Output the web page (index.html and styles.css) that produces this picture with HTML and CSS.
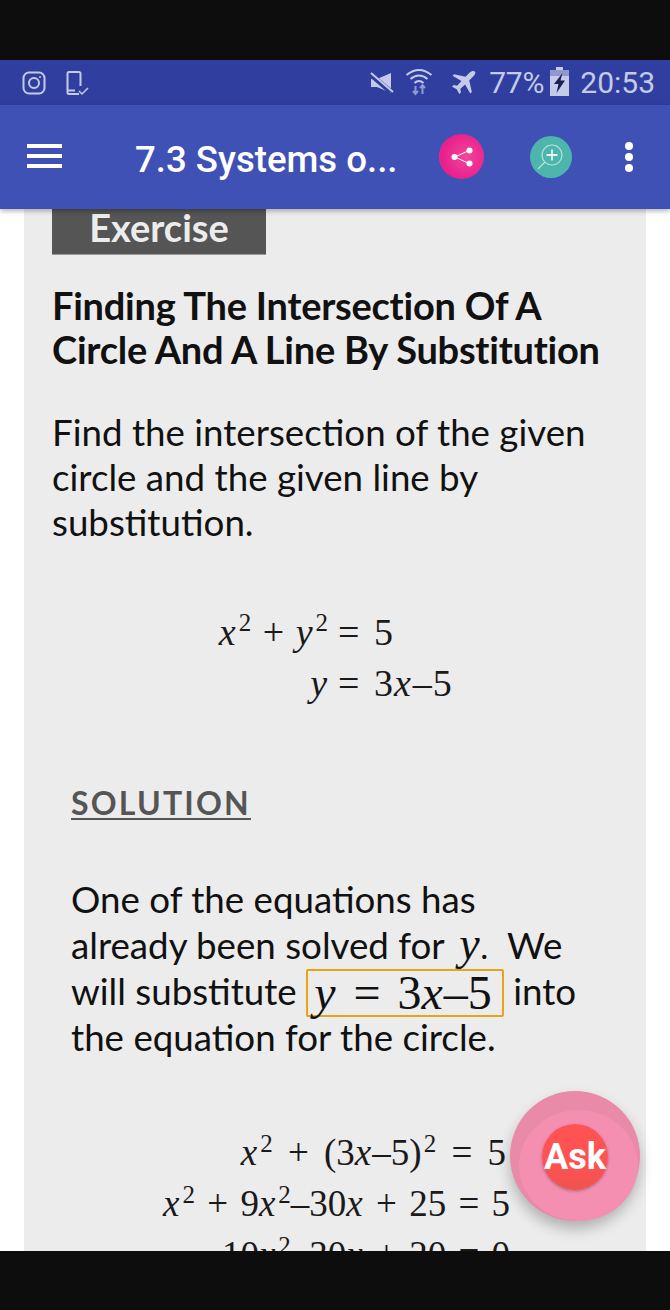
FILE: index.html
```html
<!DOCTYPE html>
<html lang="en">
<head>
<meta charset="utf-8">
<title>7.3 Systems</title>
<link rel="stylesheet" href="styles.css">
</head>
<body>
<div class="phone">
  <div class="black-top"></div>
  <div class="status">
    <svg class="st-ig" width="24" height="24" viewBox="0 0 24 24" fill="none" stroke="#c5cae9" stroke-width="2"><rect x="1.500" y="1.500" width="21" height="21" rx="5.500"/><circle cx="12" cy="12" r="5"/><circle cx="18" cy="6" r="1" fill="#c5cae9" stroke="none"/></svg>
    <svg class="st-dev" width="26" height="26" viewBox="0 0 26 26" fill="none" stroke="#c5cae9" stroke-width="2"><path d="M14 23H4a1.500 1.500 0 0 1-1.500-1.500V2.500A1.500 1.500 0 0 1 4 1h10a1.500 1.500 0 0 1 1.500 1.500V15"/><path d="M3 19.500h7" /><path d="M14 20l3 3 6-6" stroke-width="1.500"/></svg>
    <div class="st-spacer"></div>
    <svg class="st-mute" width="24" height="24" viewBox="0 0 24 24" fill="#c5cae9"><path d="M1 8h6l14-6v20L7 16H1z"/><path d="M0 3l21 18" stroke="#303f9f" stroke-width="5"/><path d="M1 2l22 19" stroke="#c5cae9" stroke-width="2"/></svg>
    <svg class="st-wifi" width="28" height="28" viewBox="0 0 28 28" fill="none" stroke="#c5cae9" stroke-width="2"><path d="M1.500 7Q14-3 26.500 7"/><path d="M5.500 11Q14 4 22.500 11"/><path d="M9.500 15Q14 11 18.500 15"/><path d="M10.500 18v8M8 23l2.500 3 2.500-3" stroke="#8f99cf"/><path d="M17.500 26v-8M15 20l2.500-3 2.500 3" stroke="#8f99cf"/></svg>
    <svg class="st-plane" width="25" height="25" viewBox="0 0 24 24" fill="#c5cae9"><path d="M23 1.500c-1.500-1-3.500-.5-5 1L14 6.500 3 4 1.500 5.500l8.500 5-4 4.500-3.500-.5L1 16l4.500 2.500L8 23l1.500-1.500-.5-3.500 4.500-4 5 8.500L20 21l-2.500-11 4-4c1.500-1.500 2.500-3 1.500-4.500z"/></svg>
    <span class="st-pct">77%</span>
    <svg class="st-batt" width="19" height="29" viewBox="0 0 19 29"><path d="M6 0h7v3h6v26H0V3h6z" fill="#c5cae9"/><path d="M0 3h19v6H0z" fill="#8f99cf"/><path d="M12.500 6L4 17h4.500l-2 9L15 13.500h-4.500z" fill="#1a2050"/></svg>
    <span class="st-time">20:53</span>
  </div>
  <header class="appbar">
    <div class="burger"><span></span><span></span><span></span></div>
    <div class="title">7.3 Systems o...</div>
    <div class="round share">
      <svg width="30" height="30" viewBox="0 0 30 30" fill="#fff" stroke="#fff" stroke-width="1"><path d="M8 15l14-6.500M8 15l14 6.500" fill="none"/><circle cx="7.500" cy="15" r="3" stroke="none"/><circle cx="22.500" cy="8.500" r="3" stroke="none"/><circle cx="22.500" cy="21.500" r="3" stroke="none"/></svg>
    </div>
    <div class="round zoom">
      <svg width="34" height="34" viewBox="0 0 34 34" fill="none" stroke="#b6e2da" stroke-width="1.200"><circle cx="18" cy="15" r="10"/><path d="M11 22L4 29"/><path d="M18 9.500v11M12.500 15h11" stroke="#e2f4f0" stroke-width="1.800"/></svg>
    </div>
    <div class="dots"><i></i><i></i><i></i></div>
  </header>
  <main class="content">
    <article class="card">
      <div class="badge">Exercise</div>
      <h1 class="heading">Finding The Intersection Of A Circle And A Line By Substitution</h1>
      <p class="lead">Find the intersection of the given circle and the given line by substitution.</p>
      <div class="math-a">
        <div class="eq-row"><span class="lhs"><i>x</i><sup>2</sup> + <i>y</i><sup>2</sup></span><span class="rhs">= 5</span></div>
        <div class="eq-row"><span class="lhs"><i>y</i></span><span class="rhs">= 3<i>x</i>–5</span></div>
      </div>
      <section class="solution">
        <h2 class="sol-title">SOLUTION</h2>
        <p class="sol-text">One of the equations has already been solved for <i class="mi">y</i><span class="mdot">.</span>&nbsp; We will substitute <span class="boxed"><i>y</i> = 3<i>x</i>–5</span> into the equation for the circle.</p>
        <div class="math-b">
          <div class="b1"><i>x</i><sup>2</sup> + (3<i>x</i>–5)<sup>2</sup> = 5</div>
          <div class="b2"><i>x</i><sup>2</sup> + 9<i>x</i><sup>2</sup>–30<i>x</i> + 25 = 5</div>
          <div class="b2">10<i>x</i><sup>2</sup>–30<i>x</i> + 20 = 0</div>
        </div>
      </section>
    </article>
  </main>
  <div class="black-bottom"></div>
  <div class="fab"><div class="fab-inner"></div><div class="ask">Ask</div></div>
</div>
</body>
</html>
```
FILE: styles.css
```css
* { box-sizing: border-box; }
html, body { margin: 0; padding: 0; }
body { width: 670px; height: 1310px; overflow: hidden; background: #fff; }
.phone { position: relative; width: 670px; height: 1310px; display: flex; flex-direction: column; overflow: hidden; }
.black-top { height: 60px; background: #0d0d0d; flex: none; }
.black-bottom { height: 59px; background: #0d0d0d; flex: none; position: relative; z-index: 3; }
.status { height: 45px; flex: none; background: #303f9f; display: flex; align-items: center; padding: 0 15px 0 22px; color: #c5cae9; font-family: Roboto, sans-serif; font-size: 30px; position: relative; z-index: 2; }
.st-dev { margin-left: 19px; margin-top: 2px; }
.st-spacer { flex: 1; }
.st-mute { margin-right: 11px; }
.st-wifi { margin-right: 18px; margin-top: -2px; }
.st-plane { margin-right: 13px; }
.st-pct { margin-right: 6px; letter-spacing: -.2px; }
.st-batt { margin-right: 11px; margin-top: -2px; }
.appbar { height: 104px; flex: none; background: #3f51b5; display: flex; align-items: center; position: relative; z-index: 2; box-shadow: 0 2px 5px rgba(0,0,0,.3); }
.burger { margin-left: 27px; width: 35px; display: flex; flex-direction: column; gap: 6px; margin-top: -2px; }
.burger span { display: block; height: 4px; background: #fff; }
.title { margin-left: 73px; width: 290px; flex: none; color: #fff; font: 500 36.600px Roboto, sans-serif; white-space: nowrap; margin-top: 4px; }
.round { border-radius: 50%; display: flex; align-items: center; justify-content: center; flex: none; }
.share { width: 45px; height: 45px; margin-left: 14px; margin-top: -1px; background: radial-gradient(circle at 60% 50%, #f0479a, #e91e8c 70%, #f0489a); }
.zoom { width: 42px; height: 42px; margin-left: 46px; margin-top: 0; background: #4db6ac; }
.dots { margin-left: 53px; margin-top: 0; display: flex; flex-direction: column; gap: 3px; }
.dots i { display: block; width: 8px; height: 8px; border-radius: 50%; background: #fff; }
.content { flex: 1; min-height: 0; overflow: hidden; background: #fff; padding: 0 24px; }
.card { background: #ececec; min-height: 100%; padding: 0 28px; font-family: Lato, sans-serif; font-variant-ligatures: none; color: #111; }
.badge { width: 214px; height: 46px; background: #555; color: #ececec; font: 700 38px/36px Lato, sans-serif; text-align: center; border-bottom: 1px solid #999; }
.heading { margin: 28px 0 0; font: 700 38px/44px Lato, sans-serif; letter-spacing: -.25px; color: #111; }
.lead { margin: 39px 0 0; font: 400 36.700px/45px Lato, sans-serif; }
.math-a, .math-b { font-family: "Liberation Serif", serif; color: #1a1a1a; white-space: nowrap; }
.math-a { margin-top: 62px; font-size: 38px; line-height: 51px; }
.math-a sup, .math-b sup { font-size: 25px; line-height: 0; margin-left: 2px; }
.math-a i, .math-b i { margin-right: 1px; }
.eq-row { display: grid; grid-template-columns: 276px 1fr; column-gap: 10px; }
.lhs { text-align: right; word-spacing: 2px; }
.rhs { word-spacing: 3px; letter-spacing: 1px; }
.solution { padding: 0 32px 0 19px; }
.sol-title { margin: 75px 0 0; font: 700 32px/38px Lato, sans-serif; letter-spacing: 2.200px; color: #555; text-decoration: underline; text-decoration-thickness: 2px; text-underline-offset: 3px; }
.sol-text { margin: 54px 0 0; font: 400 36.700px/46px Lato, sans-serif; }
.mi { font: italic 46px/0 "Liberation Serif", serif; margin-left: 6px; }
.mdot { font: 400 36px/0 "Liberation Serif", serif; }
.boxed { display: inline-block; height: 48px; margin: -4px 0; font: 48px/44px "Liberation Serif", serif; border: 2px solid #e8a317; border-radius: 2px; padding: 0 10px 0 6px; word-spacing: 5px; vertical-align: -4px; }
.boxed i { margin-right: 1px; }
.math-b { margin-top: 67px; font-size: 37px; line-height: 51px; text-align: right; word-spacing: 3px; }
.b1 { padding-right: 80px; word-spacing: 6px; }
.b2 { padding-right: 76px; }
.fab { position: absolute; left: 510px; top: 1091px; width: 130px; height: 130px; border-radius: 50%; background: #e88aa8; box-shadow: 0 8px 14px rgba(0,0,0,.25); z-index: 2; }
.fab-inner { position: absolute; left: 9px; top: 19px; width: 119px; height: 111px; border-radius: 50%; background: #f48fb1; }
.ask { position: absolute; left: 32px; top: 33px; width: 66px; height: 66px; border-radius: 50%; background: linear-gradient(#ff5252 55%, #ef5350); box-shadow: 0 1px 3px rgba(0,0,0,.3); color: #fff; font: 700 36px/66px Roboto, sans-serif; text-align: center; }
```
